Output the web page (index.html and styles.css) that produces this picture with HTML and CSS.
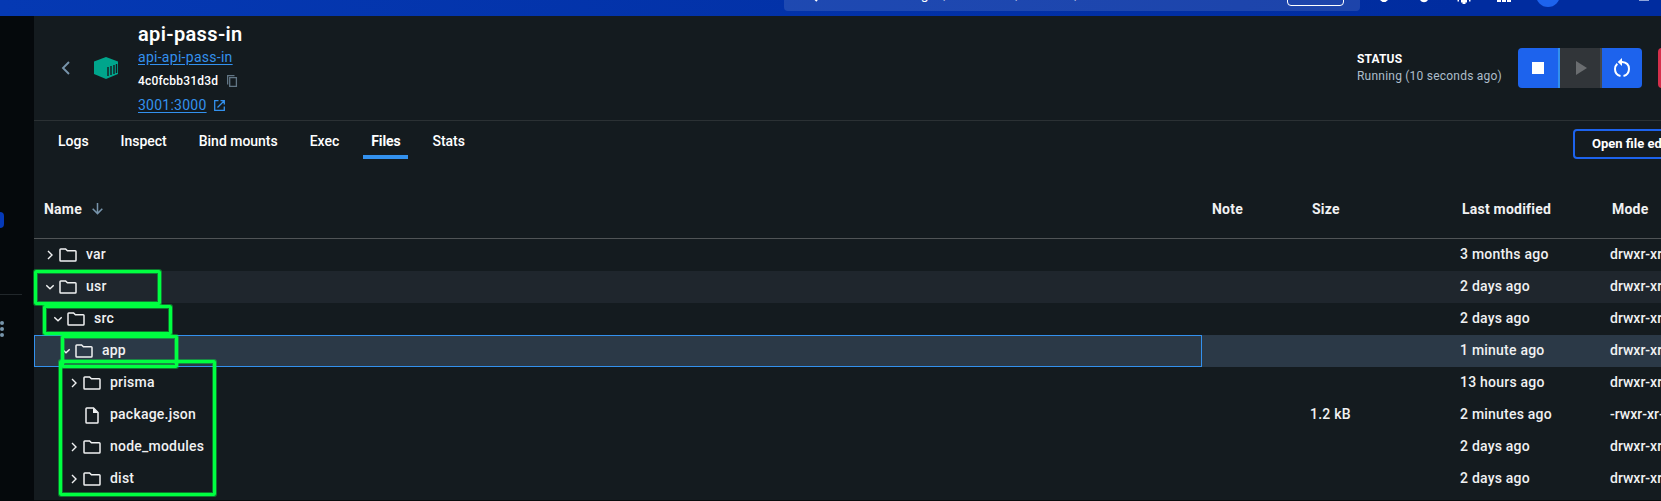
FILE: index.html
```html
<!DOCTYPE html>
<html lang="en">
<head>
<meta charset="utf-8">
<title>api-pass-in</title>
<link rel="stylesheet" href="styles.css">
</head>
<body>
<svg class="defs" width="0" height="0">
  <symbol id="folder" viewBox="0 0 18 14"><path d="M1 1.8Q1 1 1.8 1H6.6L8.4 2.8H16.2Q17 2.8 17 3.6V12.2Q17 13 16.2 13H1.8Q1 13 1 12.2Z" fill="none" stroke="currentColor" stroke-width="1.5"/></symbol>
  <symbol id="right" viewBox="0 0 8 10"><path d="M2 1L6 5L2 9" fill="none" stroke="currentColor" stroke-width="1.4"/></symbol>
  <symbol id="down" viewBox="0 0 8 10"><path d="M0.3 3.2L4 6.8L7.7 3.2" fill="none" stroke="currentColor" stroke-width="1.4"/></symbol>
</svg>
<header class="topbar">
  <div class="search">
    <svg class="lens" width="14" height="14" viewBox="0 0 14 14"><circle cx="5" cy="5" r="4" fill="none" stroke="#fff" stroke-width="1.5"/><path d="M8 8L13 13" stroke="#fff" stroke-width="2"/></svg>
    <span class="search-text">Search for images, containers, volumes, extensions and more...</span>
    <span class="kbd"></span>
  </div>
  <svg class="top-icons" width="301" height="16" viewBox="0 0 301 16">
    <path d="M20 0H28L25.5 2H22.5ZM60 0H68Q66.500 2.300 64 2.300Q61.500 2.300 60 0Z" fill="#fff"/>
    <path d="M101 0H107V2.500H105.500V4H102.500V2.500H101ZM97.500 0H99V1.500H97.500ZM109 0H110.500V1.500H109ZM137 0H141V2H137ZM142 0H146V2H142ZM147 0H151V2H147Z" fill="#fff"/>
    <circle cx="188" cy="-5" r="12" fill="#1d63ed"/>
    <path d="M279 0H289V1H279Z" fill="#8fa5dc"/>
  </svg>
</header>
<div class="shell">
  <aside class="sidebar">
    <div class="side-active"></div>
    <div class="side-line"></div>
    <svg class="side-dots" width="4" height="18" viewBox="0 0 4 18"><g fill="#7794ab"><circle cx="2" cy="3" r="2"/><circle cx="2" cy="9" r="2"/><circle cx="2" cy="15" r="2"/></g></svg>
  </aside>
  <main class="main">
    <section class="head">
      <svg class="back" width="10" height="14" viewBox="0 0 10 14"><path d="M8 1L2 7L8 13" fill="none" stroke="#7794ab" stroke-width="1.900"/></svg>
      <svg class="cube" width="24" height="22" viewBox="0 0 24 22"><path d="M12 0L24 4.500V17L12 22L0 17V4.500Z" fill="#00a58c"/><path d="M14 10V19M17 9V18M20 8V17M22.500 7V16" stroke="#141b1f" stroke-width="1.400"/></svg>
      <div class="info">
        <h1 class="title">api-pass-in</h1>
        <a class="link image">api-api-pass-in</a>
        <div class="line hash">4c0fcbb31d3d
          <svg width="11" height="13" viewBox="0 0 11 13"><path d="M0.600 9.500V0.700H7.500M2.700 2.700H9.400V11.400H2.700Z" fill="none" stroke="#627685" stroke-width="1.300"/></svg></div>
        <div class="line port"><a class="link">3001:3000</a>
          <svg width="11" height="11" viewBox="0 0 11 11"><path d="M4.500 0.700H0.700V10.300H10.300V6.500M6.500 0.700H10.300V4.500M10 1L3.500 7.500" fill="none" stroke="#3391ee" stroke-width="1.300"/></svg></div>
      </div>
      <div class="status"><b>STATUS</b><span>Running (10 seconds ago)</span></div>
      <div class="actions">
        <div class="btn stop"><i></i></div>
        <div class="btn play"><svg width="11" height="14" viewBox="0 0 11 14"><path d="M0 0L11 7L0 14Z" fill="#6a6d70"/></svg></div>
        <div class="btn restart"><svg width="18" height="20" viewBox="0 0 18 20"><path d="M8.500 4H9Q16 4.500 16 11Q15.800 16.800 10.500 17.900M7.500 17.900Q2 16.800 2 11Q2.100 7.800 4.300 5.700" fill="none" stroke="#fff" stroke-width="2"/><path d="M9 0V8L4.700 4Z" fill="#fff"/></svg></div>
      </div>
      <div class="delete"></div>
    </section>
    <nav class="tabs">
      <span class="tab">Logs</span><span class="tab">Inspect</span><span class="tab">Bind mounts</span><span class="tab">Exec</span><span class="tab active">Files</span><span class="tab">Stats</span>
      <div class="editor">Open file editor</div>
    </nav>
    <section class="table">
      <div class="row thead"><div class="name-h">Name <svg width="11" height="12" viewBox="0 0 11 12"><path d="M5.500 0V10.500M0.700 5.800L5.500 10.600L10.300 5.800" fill="none" stroke="#7794ab" stroke-width="1.500"/></svg></div><div>Note</div><div>Size</div><div>Last modified</div><div>Mode</div></div>
      <div class="row"><div class="name"><svg class="chev"><use href="#right"/></svg><svg class="folder"><use href="#folder"/></svg>var</div><div></div><div></div><div>3 months ago</div><div class="mode">drwxr-xr-x</div></div>
      <div class="row hover"><div class="name"><svg class="chev"><use href="#down"/></svg><svg class="folder"><use href="#folder"/></svg>usr</div><div></div><div></div><div>2 days ago</div><div class="mode">drwxr-xr-x</div></div>
      <div class="row"><div class="name l1"><svg class="chev"><use href="#down"/></svg><svg class="folder"><use href="#folder"/></svg>src</div><div></div><div></div><div>2 days ago</div><div class="mode">drwxr-xr-x</div></div>
      <div class="row selected"><div class="name l2"><svg class="chev"><use href="#down"/></svg><svg class="folder"><use href="#folder"/></svg>app</div><div></div><div></div><div>1 minute ago</div><div class="mode">drwxr-xr-x</div></div>
      <div class="row"><div class="name l3"><svg class="chev"><use href="#right"/></svg><svg class="folder"><use href="#folder"/></svg>prisma</div><div></div><div></div><div>13 hours ago</div><div class="mode">drwxr-xr-x</div></div>
      <div class="row"><div class="name l3"><svg class="chev"></svg><svg class="file" viewBox="0 0 14 17"><path d="M1 1.800Q1 1 1.800 1H8.500L13 5.500V15.200Q13 16 12.200 16H1.800Q1 16 1 15.200Z" fill="none" stroke="currentColor" stroke-width="1.500"/><path d="M8 1V6H13Z" fill="currentColor"/></svg>package.json</div><div></div><div>1.2 kB</div><div>2 minutes ago</div><div class="mode">-rwxr-xr-x</div></div>
      <div class="row"><div class="name l3"><svg class="chev"><use href="#right"/></svg><svg class="folder"><use href="#folder"/></svg>node_modules</div><div></div><div></div><div>2 days ago</div><div class="mode">drwxr-xr-x</div></div>
      <div class="row"><div class="name l3"><svg class="chev"><use href="#right"/></svg><svg class="folder"><use href="#folder"/></svg>dist</div><div></div><div></div><div>2 days ago</div><div class="mode">drwxr-xr-x</div></div>
    </section>
  </main>
</div>
<div class="mark mark-usr"></div>
<div class="mark mark-src"></div>
<div class="mark mark-app"></div>
<div class="mark mark-files"></div>
</body>
</html>
```
FILE: styles.css
```css
* { box-sizing: border-box; }
body { margin: 0; width: 1661px; height: 501px; overflow: hidden; position: relative; background: #141b1f; color: #fff; font-family: Roboto, sans-serif; font-size: 14px; }
svg { display: block; flex: none; }
.defs { position: absolute; }
.topbar { height: 16px; display: flex; overflow: hidden; background: linear-gradient(90deg, #0539b3, #002c9f 88%); padding-left: 784px; }
.search { width: 576px; height: 11px; background: rgba(255,255,255,.115); border-radius: 0 0 4px 4px; display: flex; align-items: flex-start; flex: none; }
.lens { margin: -12px 0 0 20px; }
.search-text { margin: -14px 0 0 12px; line-height: 16px; white-space: nowrap; width: 457px; flex: none; }
.kbd { width: 57px; height: 22px; margin-top: -16px; border: 1px solid #fff; border-radius: 4px; }
.shell { display: flex; height: 485px; }
.sidebar { width: 34px; flex: none; background: #05090c; padding-top: 196px; }
.side-active { width: 4px; height: 16px; background: #0539b8; border-radius: 0 4px 4px 0; }
.side-line { width: 22px; height: 1px; background: #21272b; margin-top: 66px; }
.side-dots { margin-top: 25px; }
.main { width: 1627px; flex: none; overflow: hidden; border-bottom: 1px solid #080c0e; }
.head { height: 105px; display: flex; border-bottom: 1px solid #2b3134; }
.back { margin: 45px 0 0 27px; }
.cube { margin: 41px 0 0 23px; }
.info { margin-left: 20px; width: 1219px; flex: none; padding-top: 6px; }
.title { margin: 0; font-size: 20px; line-height: 24px; font-weight: 600; letter-spacing: .35px; }
.link { color: #3391ee; text-decoration: underline; text-underline-offset: 2px; letter-spacing: .28px; }
.image { display: block; line-height: 22px; }
.line { display: flex; align-items: center; }
.hash { font-size: 12px; line-height: 26px; gap: 9px; font-weight: 500; letter-spacing: .2px; }
.port { line-height: 22px; gap: 7px; }
.port .link { letter-spacing: .25px; }
.status { width: 161px; flex: none; padding-top: 35px; font-size: 12px; line-height: 17px; display: flex; flex-direction: column; }
.status b { font-weight: 700; letter-spacing: .15px; }
.status span { color: #adbecb; letter-spacing: .22px; }
.actions { display: flex; margin-top: 32px; height: 40px; width: 124px; flex: none; border-radius: 4px; overflow: hidden; }
.btn { display: flex; align-items: center; justify-content: center; background: #1d63ed; width: 42px; }
.stop { border-right: 2px solid #3391ee; }
.stop i { width: 12px; height: 12px; background: #fff; }
.play { background: #313539; border-right: 2px solid #44484b; padding-left: 2px; }
.restart { width: 40px; }
.delete { width: 40px; height: 40px; margin: 32px 0 0 16px; background: #d52f4b; border-radius: 4px; flex: none; }
.tabs { height: 57px; display: flex; gap: 16px; padding-left: 16px; }
.tab { padding: 0 8px; height: 38px; line-height: 40px; white-space: nowrap; font-weight: 500; letter-spacing: -.02px; }
.active { border-bottom: 4px solid #3391ee; font-weight: 700; letter-spacing: -.12px; }
.editor { margin: 8px 0 0 auto; width: 120px; height: 30px; line-height: 26px; border: 2px solid #1d63ed; border-radius: 4px; padding-left: 17px; font-weight: 700; font-size: 13px; white-space: nowrap; transform: translateX(32px); }
.row { display: grid; grid-template-columns: 1168px 100px 150px 150px 59px; height: 32px; line-height: 30px; white-space: nowrap; font-weight: 500; color: #f0f1f2; letter-spacing: .22px; }
.row > div { padding-left: 8px; overflow: hidden; }
.row > .mode { letter-spacing: 0; }
.thead { height: 61px; line-height: 62px; border-bottom: 1px solid #505456; font-weight: 700; }
.row.thead > div { padding-left: 10px; }
.name-h { display: flex; align-items: center; gap: 10px; padding-top: 2px; }
.row > .name { display: flex; align-items: center; padding-left: 12px; padding-bottom: 2px; }
.name svg { position: relative; top: 1px; }
.row > .l1 { padding-left: 20px; }
.row > .l2 { padding-left: 27px; }
.row > .l3 { padding-left: 36px; }
.chev { width: 8px; height: 10px; margin-right: 5px; }
.folder { width: 18px; height: 14px; margin-right: 9px; }
.file { width: 14px; height: 17px; margin: 0 11px 0 2px; }
.hover { background: #1f262d; }
.selected { background: #2b3947; }
.selected .name { border: 1px solid #3391ee; }
.mark { position: absolute; border: 3px solid #00ff41; border-radius: 2px; box-shadow: 0 0 0 1px rgba(0,255,65,.4), inset 0 0 0 1px rgba(0,255,65,.4); }
.mark-usr { left: 34px; top: 270px; width: 127px; height: 35px; }
.mark-src { left: 43px; top: 305px; width: 129px; height: 30px; }
.mark-app { left: 61px; top: 335px; width: 117px; height: 33px; }
.mark-files { left: 59px; top: 360px; width: 157px; height: 136px; }
```
